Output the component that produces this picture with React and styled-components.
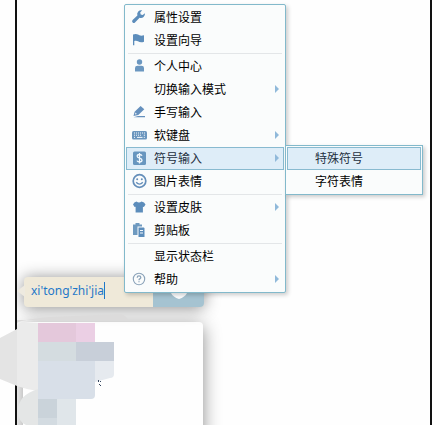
import styled, { createGlobalStyle } from "styled-components";


const mainMenu = [
    [
        { label: "属性设置", icon: "wrench" },
        { label: "设置向导", icon: "flag" },
    ],
    [
        { label: "个人中心", icon: "person" },
        { label: "切换输入模式", arrow: true },
        { label: "手写输入", icon: "pen" },
        { label: "软键盘", icon: "keyboard", arrow: true },
        { label: "符号输入", icon: "symbol", arrow: true, open: ["特殊符号", "字符表情"] },
        { label: "图片表情", icon: "smile" },
    ],
    [
        { label: "设置皮肤", icon: "shirt", arrow: true },
        { label: "剪贴板", icon: "clipboard" },
    ],
    [
        { label: "显示状态栏" },
        { label: "帮助", icon: "help", arrow: true },
    ],
]

const drawings = {
    wrench: <path d="M13.9 4.2a4 4 0 0 1-5.3 4.5L4 13.4a1.6 1.6 0 0 1-2.4-2.3l4.8-4.6A4 4 0 0 1 11.2 1.3L9.2 3.6l.5 1.9 2 .5z" fill="#5c8dbb" />,
    flag: <path d="M2 2.5c2-.9 4-.7 5 .1 1.500 1.2 3.500 1.4 6 .6v6.600c-2.5.9-4.6.5-6-.5-1.1-.8-2.6-.8-3.700-.3v4.200H2z" fill="#5c8dbb" />,
    person: (
        <g fill="#6b97c0">
            <circle cx="8.5" cy="4" r="2.7" />
            <path d="M4 13.5V10q0-2.200 2.500-2.200h4q2.500 0 2.500 2.200v3.500z" />
        </g>
    ),
    pen: (
        <g fill="#6590bd">
            <path d="M2.5 12l1.100-4.300 6-5.700 3.700 3.200-6 5.800zM4.600 8.600l-.7 2 1.900-.5z" fillRule="evenodd" />
            <path d="M7 12h7v1.300H2.5z" />
        </g>
    ),
    keyboard: (
        <g>
            <rect x="1" y="4" width="15" height="8.5" rx="1.5" fill="#6b96be" />
            <path d="M3 6h11.5M3 8.200h8M3 10.400h1.500M12.800 10.400h1.500" stroke="#f4f9fc" strokeWidth="1" strokeDasharray="1 1" />
            <path d="M6 10.400h5.500M12.800 8.200h1.200" stroke="#f4f9fc" strokeWidth="1" />
        </g>
    ),
    symbol: (
        <g>
            <rect x="2" y="1.5" width="13" height="13.5" rx="1.5" fill="#6796bf" />
            <path d="M11 5.700Q10.500 4.500 8.500 4.500 6.200 4.500 6.200 6.200 6.200 7.600 8.500 8.100 11 8.700 11 10.200 11 12 8.500 12 6.300 12 6 10.700M8.500 3v10.500" fill="none" stroke="#f1f8fd" strokeWidth="1.3" />
        </g>
    ),
    smile: (
        <g>
            <circle cx="8.5" cy="8" r="6.3" fill="none" stroke="#658fba" strokeWidth="1.7" />
            <circle cx="6.2" cy="6.3" r="1" fill="#658fba" />
            <circle cx="10.8" cy="6.3" r="1" fill="#658fba" />
            <path d="M5.200 9.200q3.300 3.800 6.600 0" fill="none" stroke="#658fba" strokeWidth="1.4" />
        </g>
    ),
    shirt: <path d="M5.500 2.500q2.500 2.200 5 0Q13.500 3 14.500 5.500l-1.600 2.600-1 -.4v5.800H4.600V7.700l-1 .4L2 5.500Q3 3 5.500 2.500z" fill="#5c8dbb" />,
    clipboard: (
        <g>
            <path d="M2 2.500h2.500V1h4v1.500H11v2H6.500V13H2z" fill="#6e9ac0" />
            <path d="M7.500 5.500H13l.5 1V15h-6z" fill="#5c8dbb" />
            <path d="M9 8.500h3M9 11h3" stroke="#f4f9fc" strokeWidth="1" />
        </g>
    ),
    help: (
        <g fill="none" stroke="#8ba3b9">
            <circle cx="8" cy="8" r="5.7" strokeWidth="1.1" />
            <path d="M6.200 6.700q0-1.800 1.800-1.800t1.800 1.600q0 .8-1 1.400-.8.5-.8 1.300M8 10.200v1.100" strokeWidth="1.3" />
        </g>
    ),
}

function Icon({ name }) {
    return (
        <IconBox viewBox="0 0 17 16" aria-hidden="true">
            {drawings[name]}
        </IconBox>
    )
}

function MenuItem({ item }) {
    return (
        <ItemHolder role="none">
            <ItemButton type="button" role="menuitem" $active={Boolean(item.open)}>
                <Icon name={item.icon} />
                <Label>{item.label}</Label>
                {item.arrow && <Arrow />}
            </ItemButton>
            {item.open && (
                <SubMenu role="menu" aria-label={item.label}>
                    {item.open.map((label, i) => (
                        <li role="none" key={label}>
                            <SubButton type="button" role="menuitem" $active={i === 0}>{label}</SubButton>
                        </li>
                    ))}
                </SubMenu>
            )}
        </ItemHolder>
    )
}

function Mosaic() {
    return (
        <MosaicBox viewBox="0 0 130 112" aria-hidden="true">
            <path d="M17 10Q20 7 50 4L120 1Q126 2 128 7H17z" fill="#dcdbdb" />
            <path d="M0 25L17 16V73L0 66z" fill="#e4e4e4" />
            <path d="M23 75h15v37H23z" fill="#fefefe" />
            <path d="M17 14q2-5 7-5l14 1v68q-10-1-21-5z" fill="#ebebeb" />
            <path d="M38 76q-20 6-20 22 0 11 8 14h12z" fill="#e4e6e6" />
            <path d="M38 10h38v19H38z" fill="#e4c8db" />
            <path d="M76 10h19v19H76z" fill="#ebcfe4" />
            <path d="M38 29h38v19H38z" fill="#d4dce0" />
            <path d="M76 29h38v19H76z" fill="#c8cfd9" />
            <path d="M38 48h57v34q0 4-4 4H38z" fill="#d8dfe8" />
            <path d="M95 48h19v13q0 4-4 4L95 69z" fill="#e6eaef" />
            <path d="M38 86h19v19H38z" fill="#cad3da" />
            <path d="M38 105h19v7H38z" fill="#d3dbe1" />
            <path d="M57 86h19v26H57z" fill="#e0e6ea" />
            <path d="M98 67h1v2h-1zM100 68h1v1h-1zM99 71h1v1h-1zM100 72h1v1h-1z" fill="#34465f" />
        </MosaicBox>
    )
}

export default function App() {
    return (
        <>
            <GlobalStyle />
            <Desk>
                <Frame>
                    <Composer>
                        <Pointer viewBox="0 0 8 12" aria-hidden="true">
                            <path d="M8 0v12L0 6z" fill="#eeeae0" />
                        </Pointer>
                        <Typing>
                            <Field aria-label="拼音" defaultValue="xi'tong'zhi'jia" size="12" />
                            <Caret />
                        </Typing>
                        <SkinButton type="button" aria-label="皮肤">
                            <svg width="18" height="20" viewBox="0 0 18 20">
                                <path d="M1 6q8-7 16 0v6q-2 4-8 6-6-2-8-6z" fill="#fdfeff" />
                            </svg>
                        </SkinButton>
                    </Composer>
                    <Candidates />
                </Frame>
                <Mosaic />
                <Menu role="menu" aria-label="输入法">
                    {mainMenu.map((group, i) => (
                        <Group key={i} role="none">
                            {group.map(item => <MenuItem key={item.label} item={item} />)}
                        </Group>
                    ))}
                </Menu>
            </Desk>
        </>
    )
}


const GlobalStyle = createGlobalStyle`
* {
    box-sizing: border-box;
}
body {
    margin: 0;
    background: #fefefe;
    font-family: "Noto Sans CJK SC", sans-serif;
    font-size: 12px;
}
button, input {
    font: inherit;
    border: none;
    padding: 0;
    margin: 0;
}
ul {
    list-style: none;
    margin: 0;
    padding: 0;
}
`
const Desk = styled.main`
    position: relative;
    display: flex;
    min-height: 100vh;
    padding: 0 8px 0 15px;
    overflow: hidden;
`
const Frame = styled.section`
    flex: 1;
    display: flex;
    flex-direction: column;
    align-items: flex-start;
    padding: 277px 0 0 7px;
    border: solid #111;
    border-width: 0 2px;
    overflow: hidden;
`
const Composer = styled.div`
    position: relative;
    display: flex;
    width: 180px;
    height: 30px;
    border-radius: 4px;
    background: #efe9d9;
    box-shadow: 0 1px 16px rgba(0, 0, 0, 0.45);
`
const Pointer = styled.svg`
    position: absolute;
    left: -7px;
    top: 8px;
    width: 8px;
    height: 12px;
`
const Typing = styled.div`
    flex: 1;
    display: flex;
    align-items: center;
    padding: 0 0 4px 7px;
`
const Field = styled.input`
    field-sizing: content;
    background: none;
    outline: none;
    color: #1f78c8;
    font-family: "Noto Sans", sans-serif;
    font-size: 12px;
`
const Caret = styled.span`
    width: 1px;
    height: 17px;
    background: #1f78c8;
`
const SkinButton = styled.button`
    display: flex;
    justify-content: center;
    align-items: center;
    width: 51px;
    padding-bottom: 2px;
    border-radius: 0 4px 4px 0;
    background: #a5c3d1;
`
const Candidates = styled.div`
    flex: 1;
    width: 179px;
    margin-top: 15px;
    margin-bottom: -20px;
    border-radius: 4px;
    background: #fefefe;
    box-shadow: 0 4px 18px rgba(0, 0, 0, 0.45);
`
const MosaicBox = styled.svg`
    position: absolute;
    left: 0;
    top: 313px;
    width: 130px;
    height: 112px;
`
const Menu = styled.div`
    position: absolute;
    left: 124px;
    top: 4px;
    width: 162px;
    padding: 1px;
    border: 1px solid #82b9cb;
    border-radius: 2px;
    background: #fafcfc;
    box-shadow: 2px 2px 4px rgba(0, 0, 0, 0.2);
`
const Group = styled.ul`
    & + & {
        padding-top: 3px;
        background: linear-gradient(#e3e6e8, #e3e6e8) 2px 1px / 154px 1px no-repeat;
    }
`
const ItemHolder = styled.li`
    position: relative;
`
const ItemButton = styled.button`
    display: flex;
    align-items: center;
    width: 100%;
    height: 23px;
    padding: 0 4px 2px;
    border: 1px solid ${p => p.$active ? "#88bad0" : "transparent"};
    background: ${p => p.$active ? "#deedf8" : "none"};
    color: ${p => p.$active ? "#24303f" : "#000"};
    text-align: left;
`
const IconBox = styled.svg`
    width: 17px;
    height: 16px;
    margin-right: 6px;
`
const Label = styled.span`
    flex: 1;
`
const Arrow = styled.span`
    border: solid transparent;
    border-width: 4px 0 4px 4px;
    border-left-color: #90b9da;
`
const SubMenu = styled.ul`
    position: absolute;
    left: 159px;
    top: -2px;
    width: 138px;
    padding: 1px;
    border: 1px solid #82b9cb;
    background: #fafcfc;
    box-shadow: 2px 2px 4px rgba(0, 0, 0, 0.2);
`
const SubButton = styled.button`
    display: block;
    width: 100%;
    height: 23px;
    padding: 0 0 2px 27px;
    border: 1px solid ${p => p.$active ? "#88bad0" : "transparent"};
    background: ${p => p.$active ? "#deedf8" : "none"};
    color: ${p => p.$active ? "#24303f" : "#000"};
    text-align: left;
`
